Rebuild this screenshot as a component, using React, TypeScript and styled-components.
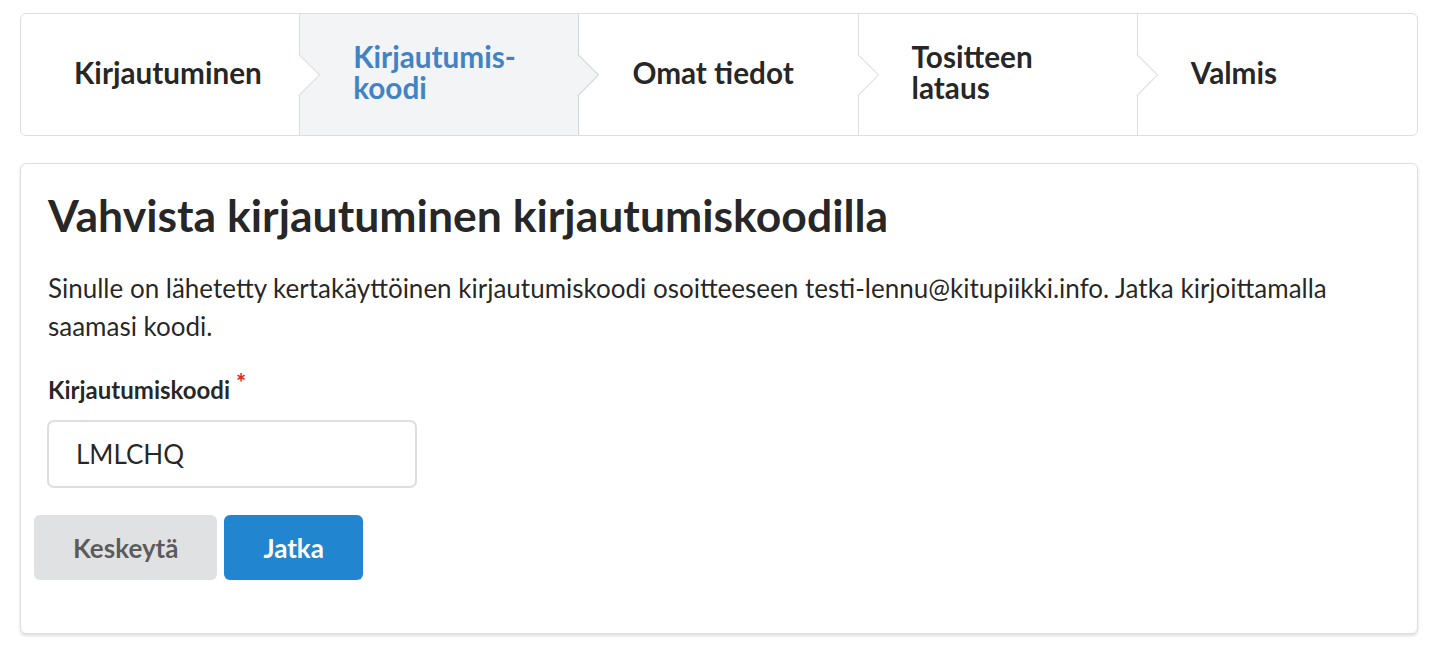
import React, { useState } from 'react';
import styled, { createGlobalStyle } from 'styled-components';

const GlobalStyle = createGlobalStyle`
  html, body {
    margin: 0;
    padding: 0;
    background: #fff;
    font-family: Lato, 'Helvetica Neue', Arial, sans-serif;
    color: rgba(0, 0, 0, 0.87);
  }
  * { box-sizing: border-box; }
`;

const Page = styled.div`
  padding: 13px 18px 20px 20px;
  display: flex;
  flex-direction: column;
  gap: 27px;
`;

// === Steps ===
const Steps = styled.div`
  display: grid;
  grid-template-columns: repeat(5, minmax(0, 1fr));
  border: 1px solid rgba(34, 36, 38, 0.15);
  border-radius: 6px;
  height: 123px;
`;

const Step = styled.div<{ $active?: boolean; $last?: boolean }>`
  position: relative;
  display: flex;
  align-items: center;
  padding: 0 50px 5px 53px;
  background: ${(p) => (p.$active ? '#f3f4f5' : 'transparent')};
  border-right: ${(p) => (p.$last ? 'none' : '1px solid rgba(34, 36, 38, 0.15)')};
  border-radius: ${(p) => (p.$last ? '0 6px 6px 0' : '0')};

  &:first-child {
    border-radius: 6px 0 0 6px;
  }

  ${(p) =>
    !p.$last &&
    `
    &::after {
      content: '';
      position: absolute;
      top: 50%;
      right: 0;
      width: 29px;
      height: 29px;
      background: ${p.$active ? '#f3f4f5' : '#fff'};
      border-style: solid;
      border-color: rgba(34, 36, 38, 0.15);
      border-width: 0 1px 1px 0;
      transform: translateY(-50%) translateX(50%) rotate(-45deg);
      z-index: 2;
    }
  `}
`;

const StepTitle = styled.div<{ $active?: boolean }>`
  font-size: 29.7px;
  font-weight: 700;
  line-height: 31px;
  color: ${(p) => (p.$active ? '#4183c4' : 'rgba(0, 0, 0, 0.87)')};
`;

// === Card ===
const Card = styled.div`
  border: 1px solid rgba(34, 36, 38, 0.15);
  border-radius: 6px;
  box-shadow: 0 2px 3px 0 rgba(34, 36, 38, 0.15);
  padding: 23px 28px 53px 27px;
`;

const Title = styled.h2`
  margin: 0 0 26px;
  font-size: 44.5px;
  font-weight: 700;
  line-height: 56px;
`;

const Text = styled.p`
  margin: 0 0 30px;
  font-size: 26px;
  line-height: 38px;
`;

const Field = styled.div`
  display: flex;
  flex-direction: column;
  align-items: flex-start;
  gap: 15px;
  margin-bottom: 27px;
`;

const Label = styled.label`
  font-size: 24px;
  font-weight: 700;
  line-height: 30px;

  &::after {
    content: '*';
    color: #db2828;
    margin-left: 6px;
    position: relative;
    top: -7px;
  }
`;

const Input = styled.input`
  width: 370px;
  height: 68px;
  margin-left: -1px;
  padding: 0 27px;
  border: 2px solid rgba(34, 36, 38, 0.15);
  border-radius: 7px;
  font-family: Lato, sans-serif;
  font-size: 26px;
  color: rgba(0, 0, 0, 0.87);
  outline: none;
`;

const Actions = styled.div`
  display: flex;
  gap: 7px;
  margin-left: -14px;
`;

const Button = styled.button<{ $primary?: boolean }>`
  height: 65px;
  padding: 0 39px;
  border: none;
  border-radius: 6px;
  font-family: Lato, sans-serif;
  font-size: 26px;
  font-weight: 700;
  cursor: pointer;
  background: ${(p) => (p.$primary ? '#2185d0' : '#e0e1e2')};
  color: ${(p) => (p.$primary ? '#fff' : 'rgba(0, 0, 0, 0.6)')};
`;

const steps = ['Kirjautuminen', 'Kirjautumis-koodi', 'Omat tiedot', 'Tositteen lataus', 'Valmis'];

const App = () => {
  const [code, setCode] = useState('LMLCHQ');
  const active = 1;

  return (
    <>
      <GlobalStyle />
      <Page>
        <Steps>
          {steps.map((s, i) => (
            <Step key={s} $active={i === active} $last={i === steps.length - 1}>
              <StepTitle $active={i === active}>{s}</StepTitle>
            </Step>
          ))}
        </Steps>

        <Card>
          <Title>Vahvista kirjautuminen kirjautumiskoodilla</Title>
          <Text>
            Sinulle on lähetetty kertakäyttöinen kirjautumiskoodi osoitteeseen testi-lennu@kitupiikki.info. Jatka
            kirjoittamalla saamasi koodi.
          </Text>
          <Field>
            <Label>Kirjautumiskoodi</Label>
            <Input value={code} onChange={(e) => setCode(e.target.value)} />
          </Field>
          <Actions>
            <Button>Keskeytä</Button>
            <Button $primary>Jatka</Button>
          </Actions>
        </Card>
      </Page>
    </>
  );
};

export default App;
